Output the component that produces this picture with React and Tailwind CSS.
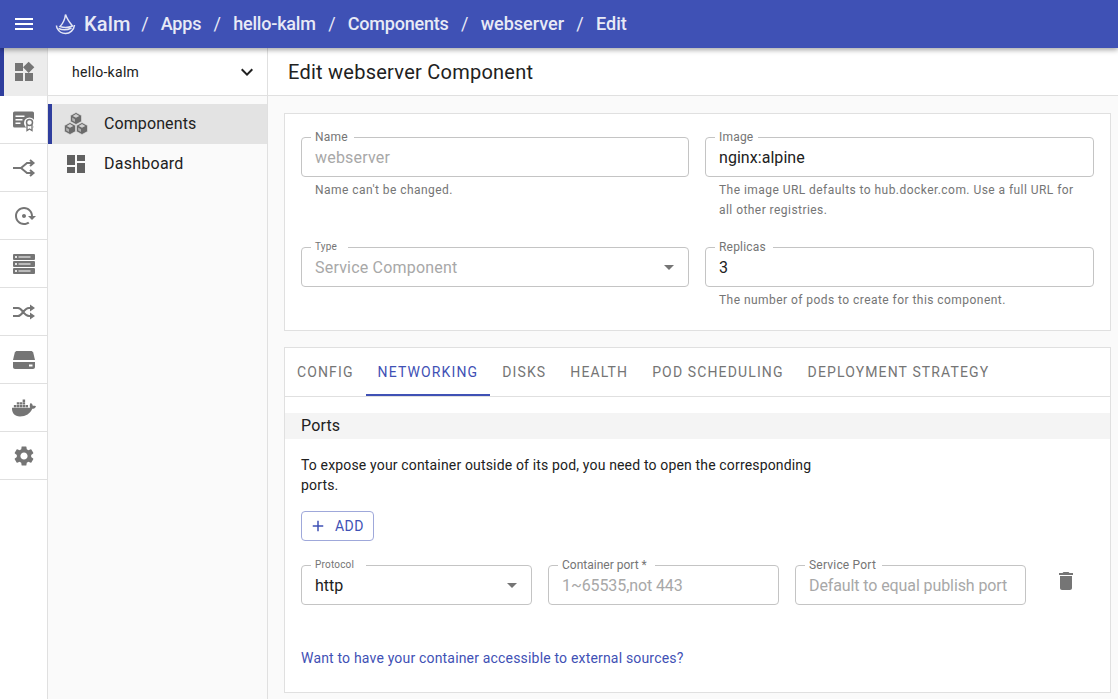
import React from "react";
import { MdWidgets, MdSettings, MdDashboard, MdDelete } from "react-icons/md";
import { FaDocker } from "react-icons/fa";

function MenuIcon() {
  return (
    <svg viewBox="0 0 24 24" className="w-6 h-6 fill-white">
      <path d="M3 18h18v-2H3v2zm0-5h18v-2H3v2zm0-7v2h18V6H3z" />
    </svg>
  );
}

function KalmLogo() {
  return (
    <svg viewBox="0 0 24 24" className="w-6 h-6 -ml-px fill-none stroke-[#e3e6f5]" strokeWidth="1.5">
      <path d="M2.5 13.5c0 1 .2 2 .8 3 1.500 3 4.700 5 8.200 5 4.500 0 8.500-3.500 9-8.500" />
      <path d="M11.500 2.500C11 7 9 11.500 6 14.500c4 1.500 8.500 1.300 12.500-.5C16 11 13 7 11.500 2.500z" />
      <path d="M4.500 16.500c3.500 1.500 9 1.500 13-.5" />
    </svg>
  );
}

function CertificateIcon() {
  return (
    <svg viewBox="0 0 24 24" className="w-6 h-6">
      <rect x="1" y="3.500" width="21" height="16" rx="1.500" fill="#757575" />
      <rect x="3.500" y="7.500" width="9" height="1.500" fill="#fff" />
      <rect x="3.500" y="11" width="7" height="1.500" fill="#fff" />
      <rect x="3.500" y="14.500" width="5" height="1.500" fill="#fff" />
      <circle cx="17.500" cy="15" r="5.500" fill="#fff" />
      <circle cx="17.500" cy="14.500" r="3" fill="none" stroke="#757575" strokeWidth="1.500" />
      <path d="M15 17v5.500l2.500-1.500 2.500 1.500V17" fill="none" stroke="#757575" strokeWidth="1.300" />
    </svg>
  );
}

function SplitIcon() {
  return (
    <svg viewBox="0 0 24 24" className="w-6 h-6 fill-none stroke-[#757575]" strokeWidth="2">
      <path d="M1 12h8l6-5h5" />
      <path d="M9 12l6 5h5" />
      <path d="M18 4l3.500 3-3.500 3" />
      <path d="M18 14l3.500 3-3.500 3" />
    </svg>
  );
}

function RestoreIcon() {
  return (
    <svg viewBox="0 0 24 24" className="w-6 h-6 fill-[#757575] -scale-x-100">
      <path d="M14 12c0-1.100-.9-2-2-2s-2 .9-2 2 .9 2 2 2 2-.9 2-2zm-2-9c-4.970 0-9 4.030-9 9H0l4 4 4-4H5c0-3.870 3.130-7 7-7s7 3.130 7 7-3.130 7-7 7c-1.510 0-2.910-.49-4.060-1.300l-1.420 1.440C8.040 20.300 9.940 21 12 21c4.970 0 9-4.030 9-9s-4.030-9-9-9z" />
    </svg>
  );
}

function ServerIcon() {
  return (
    <svg viewBox="0 0 24 24" className="w-6 h-6">
      {[2, 9, 16].map((y) => (
        <g key={y}>
          <rect x="1" y={y} width="22" height="6" rx="1" fill="#757575" />
          <rect x="3" y={y + 2.200} width="2" height="1.600" fill="#fff" />
          <rect x="6.500" y={y + 2.200} width="12" height="1.600" fill="#ccc" />
        </g>
      ))}
    </svg>
  );
}

function ShuffleIcon() {
  return (
    <svg viewBox="0 0 24 24" className="w-6 h-6">
      <path d="M1 8h5c4.500 0 5.500 8 11 8h2M1 16h5c4.500 0 5.500-8 11-8h2" fill="none" stroke="#757575" strokeWidth="2.200" />
      <path d="M18 4.500L23 8l-5 3.500zM18 12.500l5 3.500-5 3.500z" fill="#757575" />
    </svg>
  );
}

function DiskIcon() {
  return (
    <svg viewBox="0 0 24 24" className="w-6 h-6 fill-[#757575]">
      <path d="M5 3h14c1 0 1.800.6 2.200 1.500L23 12H1l1.800-7.500C3.200 3.600 4 3 5 3z" />
      <path d="M1 14h22v5c0 1.100-.9 2-2 2H3c-1.100 0-2-.9-2-2v-5z" />
      <rect x="17" y="16.500" width="3.500" height="2" fill="#fff" />
    </svg>
  );
}

// three stacked boxes, sides dark and the tops lighter
function CubesIcon() {
  return (
    <svg viewBox="0 0 24 24" className="w-6 h-6 ml-3">
      {[
        [12, 6.500],
        [6, 16.500],
        [18, 16.500],
      ].map(([x, y]) => (
        <g key={x} transform={`translate(${x} ${y})`}>
          <path d="M0-6L5.500-3V3L0 6-5.500 3V-3z" fill="#6b6b6b" stroke="#e3e3e3" strokeWidth="0.6" />
          <path d="M0-4.400L3.300-2.600 0-.8-3.300-2.600z" fill="#d0d0d0" />
          <path d="M-3.800-.9L-1 .7V3.600L-3.800 2z" fill="#b0b0b0" />
        </g>
      ))}
    </svg>
  );
}

function ArrowDrop() {
  return (
    <svg viewBox="0 0 24 24" className="w-6 h-6 fill-[#757575] absolute right-[7px] top-[7px]">
      <path d="M7 10l5 5 5-5z" />
    </svg>
  );
}

function Field({
  label,
  notch,
  labelSize = "text-xs",
  labelTracking = "tracking-[0.2px]",
  value,
  valueTracking = "tracking-[0.2px]",
  muted,
  select,
  help,
}) {
  return (
    <div>
      <div className="relative h-10 rounded border border-[#c4c4c4] flex items-center pl-[13px] pr-2">
        <span className={`absolute left-[9px] -top-px h-[3px] bg-white ${notch}`}></span>
        <span className={`absolute left-[13px] -top-[9px] leading-4 text-[#757575] ${labelSize} ${labelTracking}`}>
          {label}
        </span>
        <span
          className={`pt-px text-base whitespace-nowrap ${valueTracking} ${muted ? "text-[#a8a8a8]" : "text-[#212121]"}`}
        >
          {value}
        </span>
        {select && <ArrowDrop />}
      </div>
      {help && (
        <p className="mt-[3px] px-[14px] text-xs leading-5 tracking-[0.45px] text-[#757575]">{help}</p>
      )}
    </div>
  );
}

const railIcons = [
  <CertificateIcon />,
  <SplitIcon />,
  <RestoreIcon />,
  <ServerIcon />,
  <ShuffleIcon />,
  <DiskIcon />,
  <FaDocker className="w-6 h-6 text-[#757575]" />,
  <MdSettings className="w-6 h-6 text-[#757575]" />,
];

const crumbs = ["Apps", "hello-kalm", "Components", "webserver", "Edit"];
const tabs = ["CONFIG", "NETWORKING", "DISKS", "HEALTH", "POD SCHEDULING", "DEPLOYMENT STRATEGY"];

export default function App() {
  return (
    <div className="h-screen overflow-hidden flex flex-col bg-[#fafafa] font-['Roboto',sans-serif] text-[#212121]">
      <header className="relative z-10 h-12 shrink-0 bg-[#3f51b5] shadow-[0_2px_5px_rgba(0,0,0,0.35)] flex items-center text-[#e8eaf6]">
        <div className="ml-3 mr-[19px]">
          <MenuIcon />
        </div>
        <KalmLogo />
        <span className="ml-[6px] text-[20px] font-medium tracking-[0.2px] text-[#e8eaf6]">Kalm</span>
        <div className="ml-[-9px] -mt-[2px] flex items-center">
          {crumbs.map((c, i) => (
            <div
              key={c}
              className={`flex items-center text-[18px] font-medium ${i < 3 ? "tracking-[-0.2px]" : "tracking-normal"}`}
            >
              <span className="w-[46px] text-center font-normal">/</span>
              <span className="-mx-[7px]">{c}</span>
            </div>
          ))}
        </div>
      </header>

      <div className="flex-1 flex min-h-0">
        <nav className="w-12 shrink-0 bg-white border-r border-[#e0e0e0]">
          <div className="h-12 flex items-center justify-center bg-[#ececec] border-l-4 border-[#2f3e9e]">
            <MdWidgets className="w-6 h-6 text-[#757575] -ml-1" />
          </div>
          {railIcons.map((icon, i) => (
            <div key={i} className="h-12 flex items-center justify-center border-b border-[#e0e0e0]">
              {icon}
            </div>
          ))}
        </nav>

        <aside className="w-[220px] shrink-0 border-r border-[#e0e0e0] bg-[#fafafa]">
          <div className="h-12 bg-white border-b border-[#e0e0e0] flex items-center justify-between pl-6 pr-2">
            <span className="text-sm tracking-[0.3px]">hello-kalm</span>
            <svg viewBox="0 0 24 24" className="w-6 h-6 fill-[#212121]">
              <path d="M16.590 8.590L12 13.170 7.410 8.590 6 10l6 6 6-6z" />
            </svg>
          </div>
          <div className="pt-2">
            <div className="h-10 flex items-center bg-[#e3e3e3] border-l-4 border-[#2f3e9e]">
              <CubesIcon />
              <span className="ml-4 text-base tracking-[0.1px]">Components</span>
            </div>
            <div className="h-10 flex items-center">
              <MdDashboard className="w-6 h-6 ml-4 text-[#616161]" />
              <span className="ml-4 text-base tracking-[0.25px]">Dashboard</span>
            </div>
          </div>
        </aside>

        <main className="flex-1 min-w-0 bg-[#fafafa]">
          <div className="h-12 bg-white border-b border-[#e0e0e0] flex items-center pl-5">
            <h1 className="text-xl font-normal tracking-[0.25px]">Edit webserver Component</h1>
          </div>

          <div className="pl-4 pr-[7px] pt-[17px]">
            <section className="bg-white border border-[#e0e0e0] px-4 pt-[23px] pb-5 grid grid-cols-[388px_389px] gap-x-4 gap-y-[27px]">
              <Field label="Name" notch="w-[43px]" value="webserver" muted help="Name can't be changed." />
              <Field
                label="Image"
                notch="w-[43px]"
                value="nginx:alpine"
                valueTracking="tracking-[0.05px]"
                help="The image URL defaults to hub.docker.com. Use a full URL for all other registries."
              />
              <Field label="Type" notch="w-[37px]" labelSize="text-[10px]" value="Service Component" muted select />
              <Field
                label="Replicas"
                notch="w-[58px]"
                value="3"
                help="The number of pods to create for this component."
              />
            </section>

            <section className="mt-4 bg-white border border-[#e0e0e0] h-[346px]">
              <div className="h-[49px] border-b border-[#e0e0e0] flex">
                {tabs.map((t) => (
                  <div
                    key={t}
                    className={`h-[48px] px-3 pt-[2px] flex items-center text-sm tracking-[1.13px] border-b-2 ${
                      t === "NETWORKING" ? "text-[#3f51b5] border-[#3f51b5]" : "text-[#757575] border-transparent"
                    }`}
                  >
                    {t}
                  </div>
                ))}
              </div>

              <div className="mt-4 h-[26px] bg-[#f4f4f4] flex items-center pl-4 text-base tracking-[0.15px]">Ports</div>

              <div className="px-4">
                <p className="mt-4 max-w-[520px] text-sm leading-5 tracking-[0.16px]">
                  To expose your container outside of its pod, you need to open the corresponding ports.
                </p>

                <button className="mt-4 h-[30px] w-[73px] rounded border border-[#9fa8da] flex items-center pl-[7px] text-sm tracking-[0.45px] text-[#3f51b5]">
                  <svg viewBox="0 0 24 24" className="w-[18px] h-[18px] fill-[#3f51b5]">
                    <path d="M19 13h-6v6h-2v-6H5v-2h6V5h2v6h6v2z" />
                  </svg>
                  <span className="ml-2">ADD</span>
                </button>

                <div className="mt-6 flex items-start gap-4">
                  <div className="w-[231px]">
                    <Field
                      label="Protocol"
                      notch="w-[55px]"
                      labelSize="text-[10px]"
                      value="http"
                      valueTracking="tracking-normal"
                      select
                    />
                  </div>
                  <div className="w-[231px]">
                    <Field
                      label="Container port *"
                      notch="w-[97px]"
                      labelTracking="tracking-normal"
                      value="1~65535,not 443"
                      valueTracking="tracking-[-0.1px]"
                      muted
                    />
                  </div>
                  <div className="w-[231px]">
                    <Field
                      label="Service Port"
                      notch="w-[77px]"
                      value="Default to equal publish port"
                      valueTracking="tracking-[-0.1px]"
                      muted
                    />
                  </div>
                  <MdDelete className="w-6 h-6 mt-1 ml-3 text-[#757575]" />
                </div>

                <a className="block mt-[43px] text-sm leading-5 tracking-[0.18px] text-[#3f51b5]">
                  Want to have your container accessible to external sources?
                </a>
              </div>
            </section>
          </div>
        </main>
      </div>
    </div>
  );
}
